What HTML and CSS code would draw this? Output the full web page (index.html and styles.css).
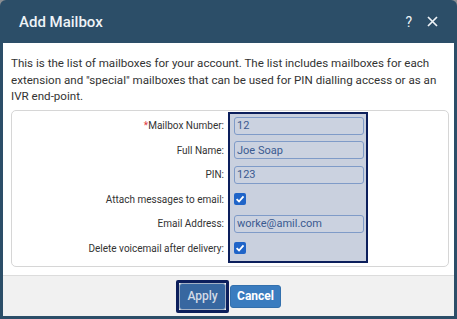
FILE: index.html
```html
<!DOCTYPE html>
<html lang="en">
<head>
    <meta charset="UTF-8">
    <meta name="viewport" content="width=device-width, initial-scale=1.0">
    <title>Add Mailbox</title>
    <link rel="stylesheet" href="styles.css">
</head>
<body>
    <div class="dialog">
        <div class="dialog__header">
            <h1 class="dialog__title">Add Mailbox</h1>
            <div class="dialog__tools">
                <span class="help">?</span>
                <svg class="close" width="11" height="11" viewBox="0 0 11 11">
                    <path d="M1 1 L10 10 M10 1 L1 10" stroke="#eef3f7" stroke-width="1.7" fill="none"/>
                </svg>
            </div>
        </div>

        <div class="dialog__body">
            <p class="intro">This is the list of mailboxes for your account. The list includes mailboxes for each extension and "special" mailboxes that can be used for PIN dialling access or as an IVR end-point.</p>

            <div class="panel">
                <div class="labels">
                    <div class="label"><span class="req">*</span>Mailbox Number:</div>
                    <div class="label">Full Name:</div>
                    <div class="label">PIN:</div>
                    <div class="label">Attach messages to email:</div>
                    <div class="label">Email Address:</div>
                    <div class="label">Delete voicemail after delivery:</div>
                </div>
                <div class="fields">
                    <div class="field"><input class="text" type="text" value="12"></div>
                    <div class="field"><input class="text" type="text" value="Joe Soap"></div>
                    <div class="field"><input class="text" type="text" value="123"></div>
                    <div class="field">
                        <span class="check">
                            <svg width="10" height="10" viewBox="0 0 10 10"><path d="M1.6 5.2 L4 7.5 L8.5 2.3" stroke="#fff" stroke-width="1.8" fill="none"/></svg>
                        </span>
                    </div>
                    <div class="field"><input class="text" type="text" value="worke@amil.com"></div>
                    <div class="field">
                        <span class="check">
                            <svg width="10" height="10" viewBox="0 0 10 10"><path d="M1.6 5.2 L4 7.5 L8.5 2.3" stroke="#fff" stroke-width="1.8" fill="none"/></svg>
                        </span>
                    </div>
                </div>
            </div>
        </div>

        <div class="dialog__footer">
            <span class="focus"><button class="btn btn--apply">Apply</button></span>
            <button class="btn">Cancel</button>
        </div>
    </div>
</body>
</html>
```

FILE: styles.css
```css
html,
body {
    margin: 0;
    background: #8b8e92;
    font-family: 'Roboto', 'Liberation Sans', sans-serif;
}

.dialog {
    width: 457px;
    height: 319px;
    box-sizing: border-box;
    padding: 0 3px 3px;
    background: #2c4e68; /* dark slate blue frame */
    border-radius: 6px 6px 0 0;
    display: flex;
    flex-direction: column;
}

.dialog__header {
    height: 43px;
    flex: none;
    display: flex;
    align-items: center;
    justify-content: space-between;
    padding: 0 16px;
}

.dialog__title {
    margin: 0;
    font-size: 15px;
    font-weight: 500;
    color: #eef3f7;
}

.dialog__tools {
    display: flex;
    align-items: center;
    gap: 15px;
    color: #eef3f7;
}

.help {
    font-size: 14px;
}

.dialog__body {
    flex: 1;
    background: #fff;
    padding: 12px 5px 0 8px;
}

.intro {
    margin: 0 0 5px;
    font-size: 11.6px;
    line-height: 16.5px;
    color: #333;
}

.panel {
    display: flex;
    gap: 4px;
    border: 1px solid #d6d6d6;
    border-radius: 5px;
    padding: 1px 0 3px;
}

.labels {
    width: 212px;
    padding-top: 2px;
}

.label {
    height: 24.5px;
    display: flex;
    align-items: center;
    justify-content: flex-end;
    font-size: 10px;
    color: #333;
}

.req {
    color: #e0393e;
}

.fields {
    width: 130px;
    border: 2px solid #0c1f5c; /* navy highlight */
    background: #c9d0de;
    padding: 0 2px 0 4px;
}

.field {
    height: 24.5px;
    display: flex;
    align-items: center;
}

.text {
    width: 130px;
    height: 18px;
    box-sizing: border-box;
    margin: 0;
    padding: 0 2px;
    border: 1px solid #7f9bc8;
    border-radius: 3px;
    background: #cbd2e0;
    color: #3a5a90;
    font-family: 'Roboto', 'Liberation Sans', sans-serif;
    font-size: 11px;
}

.check {
    width: 12px;
    height: 12px;
    border-radius: 2px;
    background: #1f64c8;
    display: flex;
    align-items: center;
    justify-content: center;
}

.dialog__footer {
    height: 40px;
    flex: none;
    border-top: 1px solid #dcdcdc;
    background: #f1f1f1;
    display: flex;
    align-items: center;
    justify-content: center;
    gap: 1px;
}

.focus {
    display: flex;
    border: 3px solid #0c1f5c;
    border-radius: 2px;
}

.btn {
    height: 23px;
    padding: 0 6px;
    border: 1px solid #3370ad;
    border-radius: 3px;
    background: #3a7cbf;
    color: #fff;
    font-family: 'Roboto', 'Liberation Sans', sans-serif;
    font-size: 12px;
    font-weight: 700;
}

.btn--apply {
    width: 47px;
    height: 27px;
    border-color: #a3b2c6;
    background: #3767a0;
    color: #d3dbe6;
    font-weight: 500;
}
```
